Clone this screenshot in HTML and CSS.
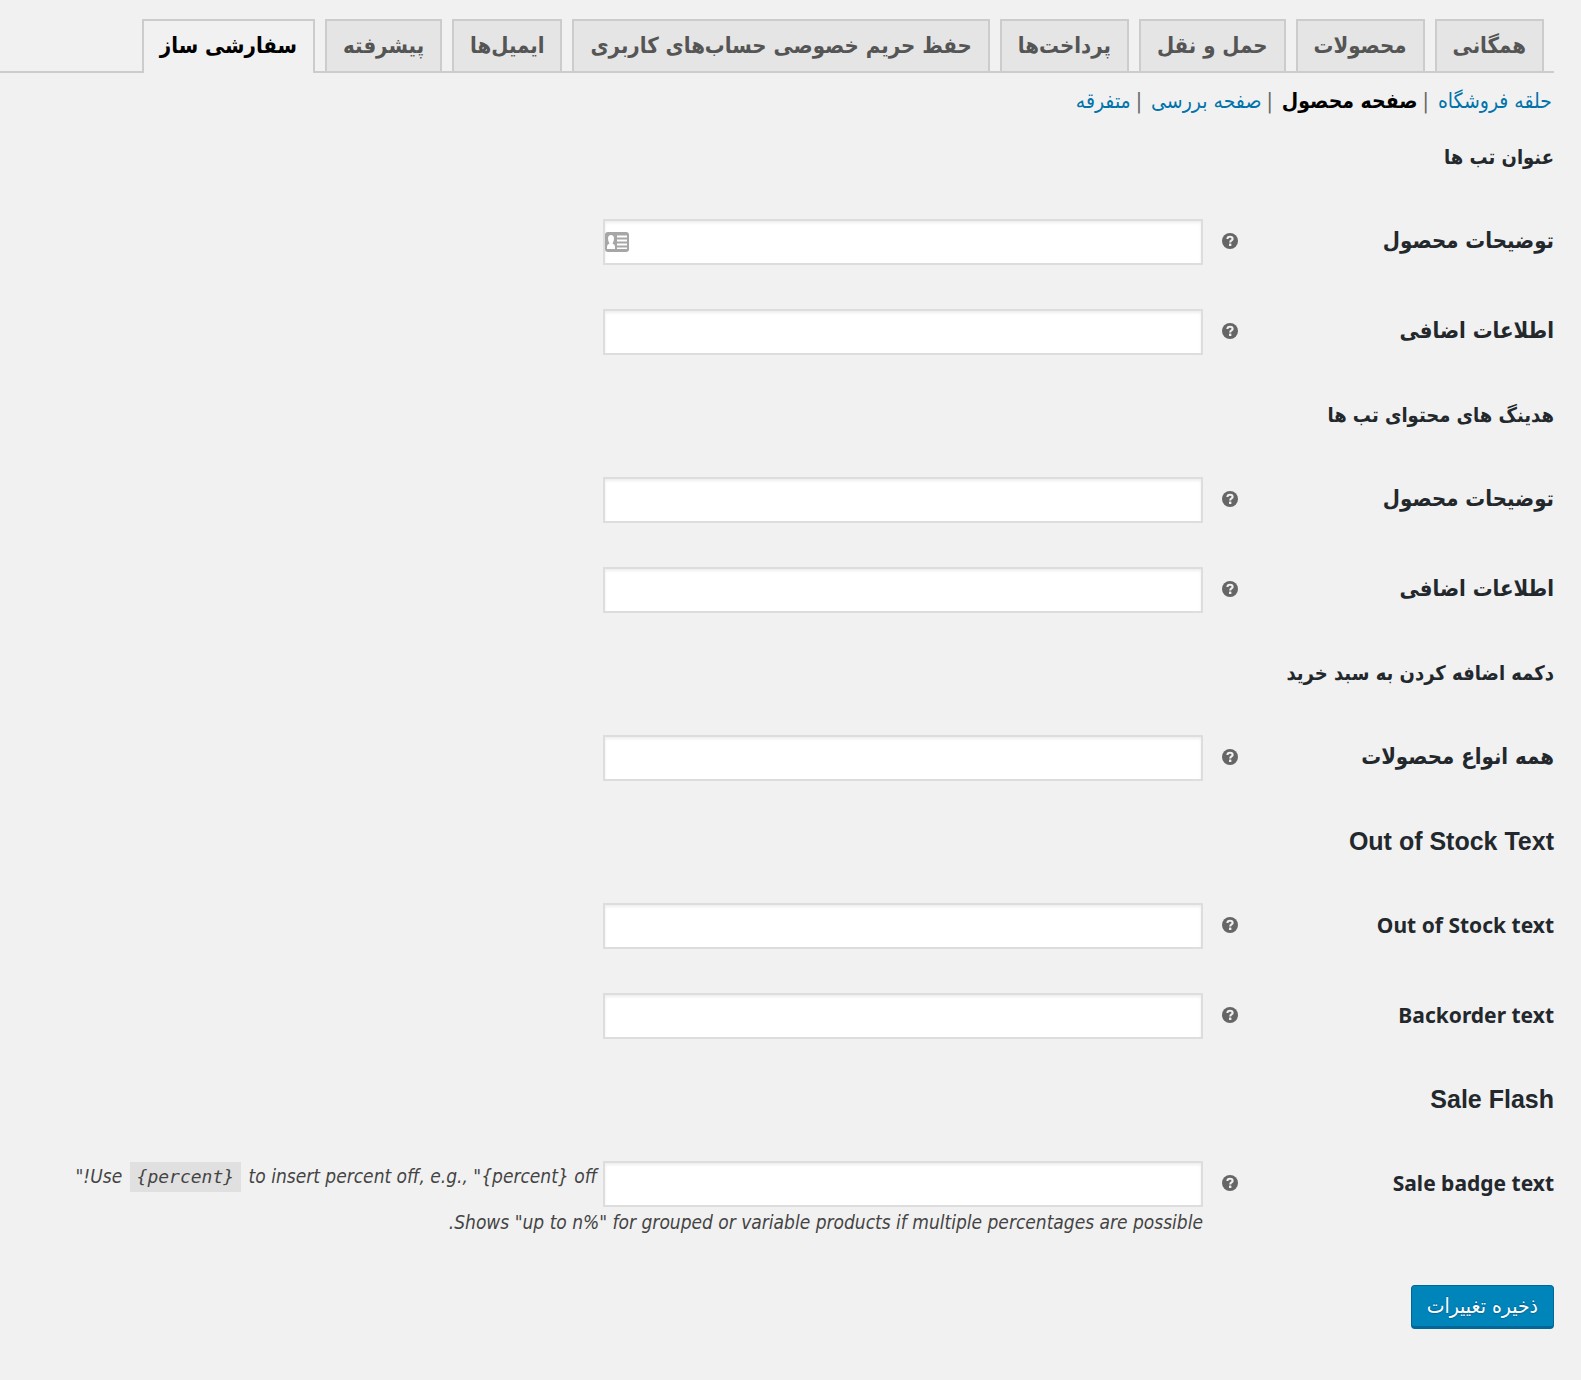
FILE: index.html
```html
<!DOCTYPE html>
<html lang="fa" dir="rtl">
<head>
<meta charset="utf-8">
<meta name="viewport" content="width=device-width, initial-scale=1">
<title>سفارشی ساز</title>
<link rel="stylesheet" href="styles.css">
</head>
<body>
<svg class="sprite" aria-hidden="true">
  <symbol id="help" viewBox="0 0 16 16">
    <circle cx="8" cy="8" r="8" fill="#666"/>
    <path d="M5.400 6.100C5.400 4.400 6.500 3.700 8 3.700S10.600 4.500 10.600 5.900C10.600 7.500 8.200 7.400 8.200 9.400" fill="none" stroke="#f1f1f1" stroke-width="2.100"/>
    <rect x="7" y="10.600" width="2.400" height="2.300" rx=".5" fill="#f1f1f1"/>
  </symbol>
</svg>
<main class="settings">
  <nav class="tabs">
    <a class="tab" href="#general">همگانی</a>
    <a class="tab" href="#products">محصولات</a>
    <a class="tab" href="#shipping">حمل و نقل</a>
    <a class="tab" href="#payments">پرداخت‌ها</a>
    <a class="tab" href="#privacy">حفظ حریم خصوصی حساب‌های کاربری</a>
    <a class="tab" href="#emails">ایمیل‌ها</a>
    <a class="tab" href="#advanced">پیشرفته</a>
    <a class="tab tab-active" href="#customizer" aria-current="page">سفارشی ساز</a>
  </nav>
  <ul class="sections">
    <li><a href="#loop">حلقه فروشگاه</a></li>
    <li><a class="current" href="#product">صفحه محصول</a></li>
    <li><a href="#checkout">صفحه بررسی</a></li>
    <li><a href="#misc">متفرقه</a></li>
  </ul>
  <form>
    <h2>عنوان تب ها</h2>
    <div class="row">
      <label for="tab-desc">توضیحات محصول</label>
      <svg class="help"><use href="#help"/></svg>
      <div class="field">
        <span class="autofill">
          <input id="tab-desc" type="text">
          <svg class="card" viewBox="0 0 24 20" aria-hidden="true">
            <rect width="24" height="20" rx="3" fill="#a6a6a6"/>
            <path d="M2 17v-2.500q0-2 2.500-3Q3 9.500 3 6.500 3 3 6 3t3 3.500q0 3-1.500 5 2.500 1 2.500 3V17zM12 3.500h10v2H12zM12 7.500h10v2H12zM12 11.500h10v2H12zM12 15.500h10v1.500H12z" fill="#fff"/>
          </svg>
        </span>
      </div>
    </div>
    <div class="row">
      <label for="tab-info">اطلاعات اضافی</label>
      <svg class="help"><use href="#help"/></svg>
      <div class="field"><input id="tab-info" type="text"></div>
    </div>
    <h2>هدینگ های محتوای تب ها</h2>
    <div class="row">
      <label for="head-desc">توضیحات محصول</label>
      <svg class="help"><use href="#help"/></svg>
      <div class="field"><input id="head-desc" type="text"></div>
    </div>
    <div class="row">
      <label for="head-info">اطلاعات اضافی</label>
      <svg class="help"><use href="#help"/></svg>
      <div class="field"><input id="head-info" type="text"></div>
    </div>
    <h2>دکمه اضافه کردن به سبد خرید</h2>
    <div class="row">
      <label for="all-types">همه انواع محصولات</label>
      <svg class="help"><use href="#help"/></svg>
      <div class="field"><input id="all-types" type="text"></div>
    </div>
    <h2 class="latin">Out of Stock Text</h2>
    <div class="row">
      <label class="latin" for="out-of-stock">Out of Stock text</label>
      <svg class="help"><use href="#help"/></svg>
      <div class="field"><input id="out-of-stock" type="text"></div>
    </div>
    <div class="row">
      <label class="latin" for="backorder">Backorder text</label>
      <svg class="help"><use href="#help"/></svg>
      <div class="field"><input id="backorder" type="text"></div>
    </div>
    <h2 class="latin">Sale Flash</h2>
    <div class="row">
      <label class="latin" for="sale-badge">Sale badge text</label>
      <svg class="help"><use href="#help"/></svg>
      <div class="field"><input id="sale-badge" type="text" aria-describedby="sale-note"> <span class="note" id="sale-note">Use <code>{percent}</code> to insert percent off, e.g., "{percent} off!"<br>Shows "up to n%" for grouped or variable products if multiple percentages are possible.</span></div>
    </div>
    <button class="save" type="submit">ذخیره تغییرات</button>
  </form>
</main>
</body>
</html>
```
FILE: styles.css
```css
* {
  box-sizing: border-box;
}

body {
  margin: 0;
  background: #f1f1f1;
  color: #444;
  font: 21px/30px "DejaVu Sans Condensed", "DejaVu Sans", sans-serif;
}

.sprite {
  display: none;
}

.settings {
  padding: 19px 27px 52px 0;
}

.tabs {
  display: flex;
  gap: 10px;
  padding-right: 10px;
  border-bottom: 2px solid #ccc;
}

.tab {
  height: 52px;
  padding: 9px 16px;
  border: 2px solid #ccc;
  border-bottom: 0;
  background: #e5e5e5;
  color: #555;
  font-size: 22px;
  font-weight: 700;
  line-height: 32px;
  white-space: nowrap;
  text-decoration: none;
}

.tab-active {
  margin-bottom: -2px;
  height: 54px;
  background: #f1f1f1;
  color: #000;
}

.sections {
  display: flex;
  margin: 0;
  padding: 13px 2px 3px;
  list-style: none;
}

.sections li + li::before {
  content: "|";
  padding: 0 9px 0 5px;
  color: #666;
}

.sections a {
  color: #0073aa;
  text-decoration: none;
}

.sections .current {
  color: #000;
  font-weight: 700;
}

h2 {
  margin: 0;
  padding: 23px 0 25px;
  color: #23282d;
  font: 700 20px/30px "DejaVu Sans Condensed", "DejaVu Sans", sans-serif;
}

h2.latin {
  font-family: "Liberation Sans", Arial, sans-serif;
  font-size: 25px;
}

.row {
  display: grid;
  grid-template-columns: 300px 16px 1fr;
  column-gap: 16px;
  min-height: 90px;
  padding: 22px 0;
}

label {
  color: #23282d;
  font-size: 22px;
  font-weight: 700;
  line-height: 44px;
}

label.latin {
  font-family: "Noto Sans", sans-serif;
  font-size: 21px;
}

.help {
  width: 16px;
  height: 16px;
  margin-top: 14px;
}

.field {
  padding-right: 3px;
}

.autofill {
  display: inline-block;
  position: relative;
}

input {
  width: 600px;
  max-width: 100%;
  height: 46px;
  margin: 0;
  padding: 4px 8px;
  border: 2px solid #ddd;
  border-radius: 0;
  background: #fff;
  box-shadow: inset 0 2px 3px rgba(0, 0, 0, .07);
  color: #32373c;
  font: inherit;
  vertical-align: top;
}

.card {
  position: absolute;
  left: 2px;
  top: 13px;
  width: 24px;
  height: 20px;
}

.note {
  font-size: 19px;
  font-style: italic;
  vertical-align: top;
}

code {
  display: inline-block;
  margin: 0 2px;
  padding: 0 7px;
  background: #e0e0e0;
  font: italic 18px/30px "DejaVu Sans Mono", monospace;
}

.save {
  display: block;
  height: 44px;
  margin-top: 26px;
  padding: 0 15px;
  border: 2px solid #006799;
  border-width: 1px 1px 3px;
  border-radius: 4px;
  background: #0085ba;
  color: #fff;
  font: 21px/38px "DejaVu Sans Condensed", "DejaVu Sans", sans-serif;
  text-shadow: 0 -1px 1px #006799, 0 1px 1px #006799;
}
```
